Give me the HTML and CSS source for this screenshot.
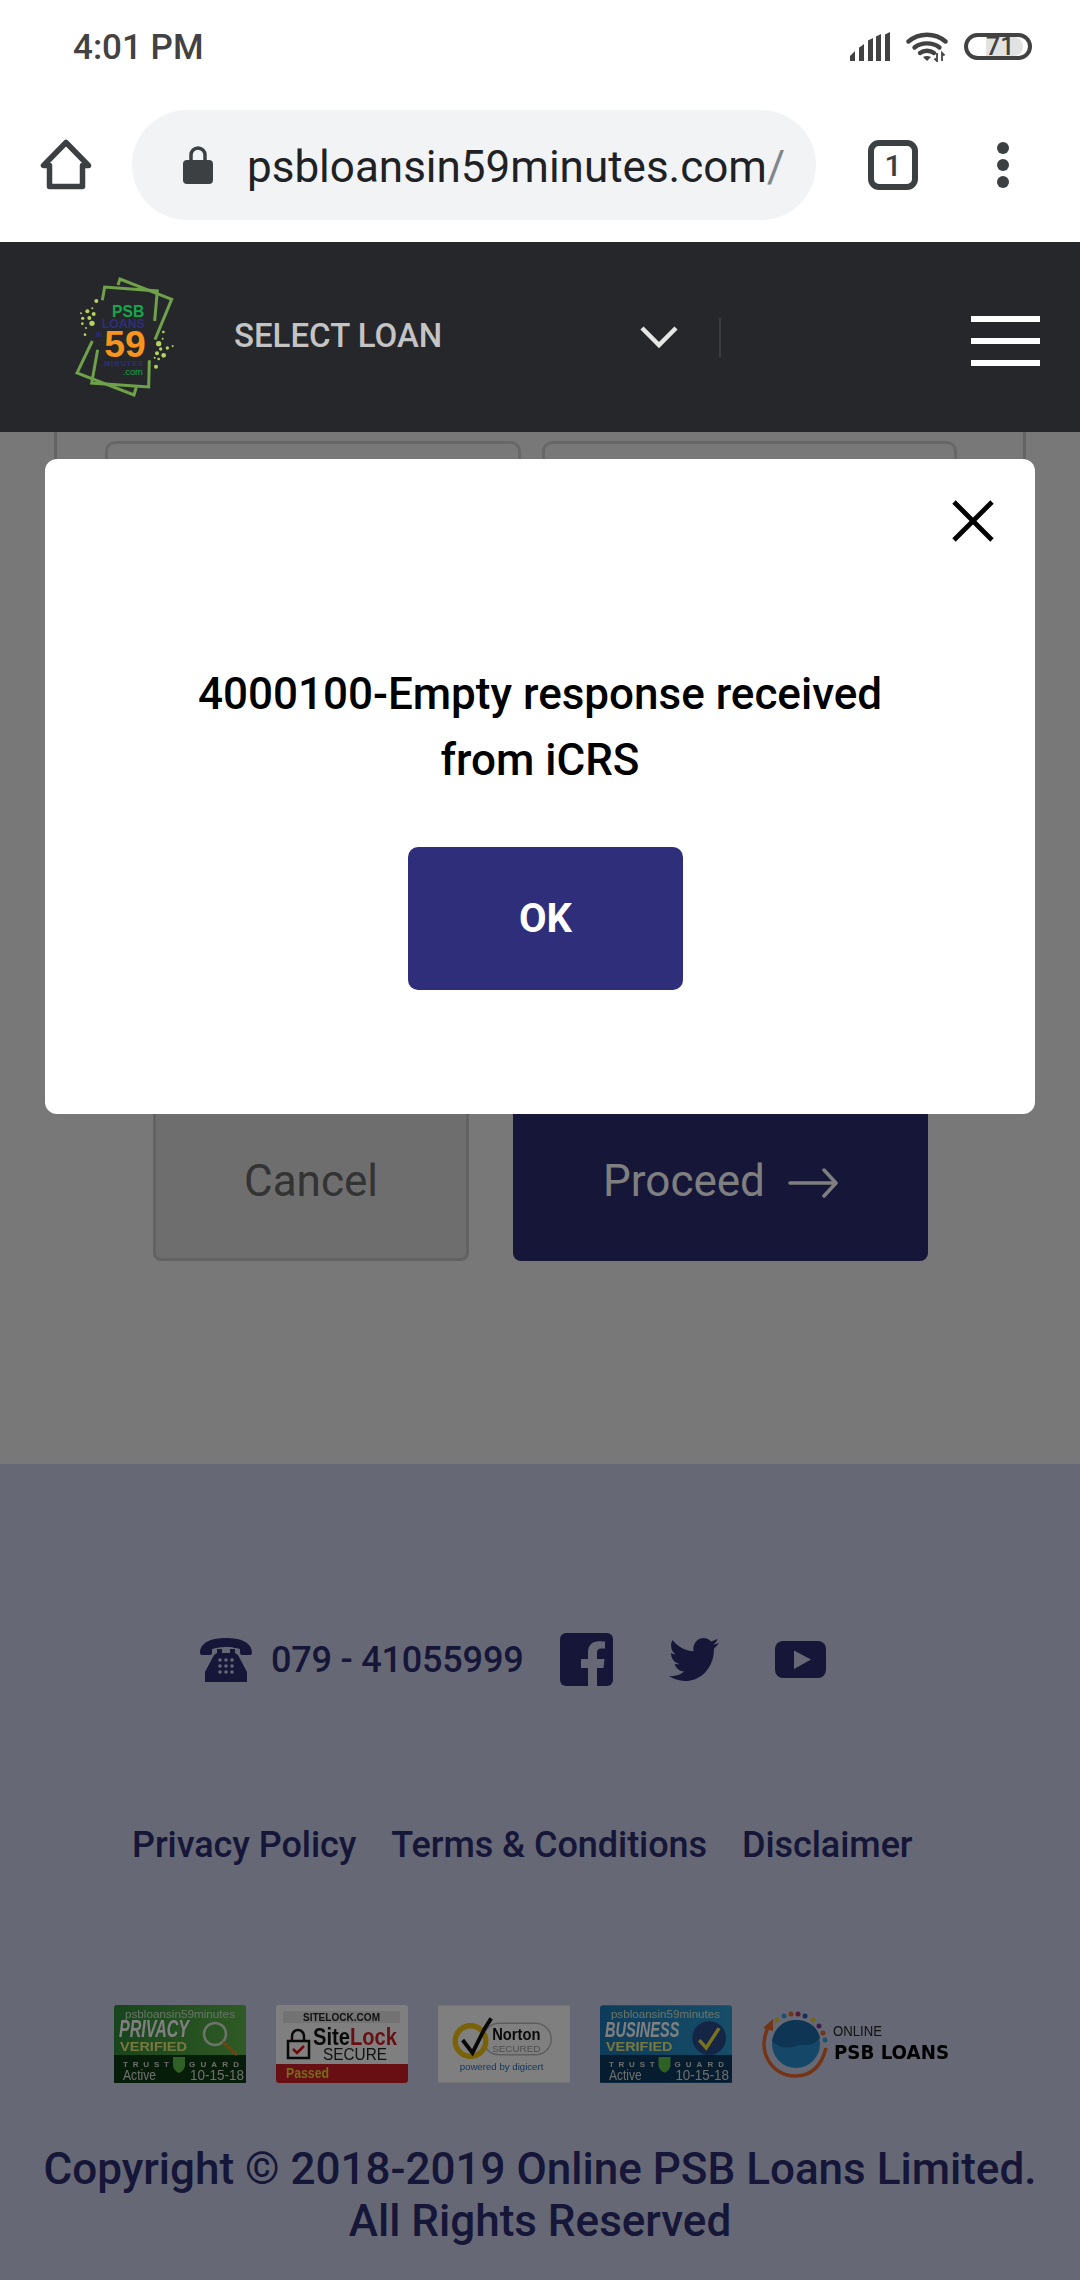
FILE: index.html
```html
<!DOCTYPE html>
<html lang="en">
<head>
<meta charset="utf-8">
<title>PSB Loans in 59 Minutes</title>
<link rel="stylesheet" href="styles.css">
</head>
<body>
<div class="status">
  <span class="time">4:01 PM</span>
  <svg class="signal" viewBox="0 0 40 29"><path d="M0 29v-5l5-5v10zM9 29V16q0-1 1-1l4-3v17zM18 29V9q0-1 1-1l4-2v23zM26 29V5q0-1 1-1l4-2v27zM35 29V3q0-1 1-1l4-2v29z" fill="#424242"/></svg>
  <svg class="wifi" viewBox="0 0 42 30"><g fill="none" stroke="#424242" stroke-width="4.4" stroke-linecap="round"><path d="M2.500 9.500C13 .5 29 .5 39.500 9.500"/><path d="M8.500 15.500C15 10 27 10 33.500 15.500"/><path d="M14 21c4-3 10-3 14 0"/></g><path d="M21 29l-4-4q4-2 8 0z" fill="#424242"/><path d="M31 21v8l-2.500-2.500M36 29v-8l2.500 2.500" fill="none" stroke="#424242" stroke-width="1.800"/></svg>
  <div class="battery"><div class="battery-fill"></div><span class="battery-text">71</span></div>
</div>

<div class="toolbar">
  <svg class="home" viewBox="0 0 52 52"><path d="M26 3.500L3.500 26.500H9.500V47.500H42.500V26.500H48.500Z" fill="none" stroke="#3c4043" stroke-width="5.500" stroke-linejoin="round"/></svg>
  <div class="omnibox">
    <svg class="lock" viewBox="0 0 30 38"><path d="M8 16V9a7 7 0 0 1 14 0v7" fill="none" stroke="#3c4043" stroke-width="3.500"/><rect y="14" width="30" height="24" rx="4" fill="#3c4043"/></svg>
    <span class="url">psbloansin59minutes.com<span class="url-end">/</span></span>
  </div>
  <div class="tabs">1</div>
  <div class="dots"><i></i><i></i><i></i></div>
</div>

<nav class="nav">
  <svg class="logo" viewBox="78 80 306 360">
    <g fill="none" stroke="#6ea14a" stroke-width="9">
      <path d="M207 104L213 86L368 147L318 268"/>
      <path d="M130 272L84 368L255 434L262 410"/>
      <path d="M160 150L167 110L325 122L317 212"/>
      <path d="M146 298L128 398L299 410L301 330"/>
    </g>
    <g fill="#b4d35f">
      <circle cx="142" cy="152" r="6"/><circle cx="115" cy="183" r="6"/><circle cx="134" cy="191" r="6"/><circle cx="101" cy="204" r="5"/><circle cx="121" cy="203" r="6"/><circle cx="129" cy="219" r="8"/><circle cx="100" cy="220" r="4"/><circle cx="108" cy="253" r="4"/><circle cx="111" cy="233" r="3"/><circle cx="130" cy="174" r="3"/><circle cx="96" cy="189" r="3"/>
      <circle cx="329" cy="280" r="8"/><circle cx="355" cy="293" r="5"/><circle cx="335" cy="296" r="5"/><circle cx="324" cy="309" r="6"/><circle cx="344" cy="315" r="7"/><circle cx="321" cy="349" r="6"/><circle cx="329" cy="326" r="4"/><circle cx="343" cy="245" r="4"/><circle cx="341" cy="265" r="3"/><circle cx="371" cy="287" r="3"/><circle cx="317" cy="322" r="3"/>
    </g>
    <text x="189" y="200" class="logo-psb">PSB</text>
    <text x="158" y="234" class="logo-loans">LOANS</text>
    <text x="140" y="260" class="logo-in">IN</text>
    <text x="166" y="320" class="logo-59">59</text>
    <text x="165" y="348" class="logo-minutes">MINUTES</text>
    <text x="221" y="375" class="logo-com">.com</text>
  </svg>
  <span class="select-loan">SELECT LOAN</span>
  <svg class="chevron" viewBox="0 0 38 25"><path d="M2 4L19 21L36 4" fill="none" stroke="#e6e6e6" stroke-width="4.500"/></svg>
  <div class="nav-divider"></div>
  <div class="burger"><i></i><i></i><i></i></div>
</nav>

<div class="content">
  <main class="main">
    <div class="panel">
      <div class="field"></div>
      <div class="field field-two"></div>
    </div>
    <div class="actions">
      <button class="btn btn-cancel">Cancel</button>
      <button class="btn btn-proceed">Proceed
        <svg class="arrow" viewBox="0 0 50 30"><path d="M2 15H47M36 2L48 15L36 28" fill="none" stroke="#fff" stroke-width="3.500" stroke-linecap="round" stroke-linejoin="round"/></svg>
      </button>
    </div>
  </main>

  <footer class="footer">
    <div class="contact">
      <svg class="phone" viewBox="0 0 52 44"><path d="M0 15C0 4 12 0 26 0s26 4 26 15c0 1-1 2-2 2h-8c-1 0-2-1-2-2v-4c-3-1-9-2-14-2s-11 1-14 2v4c0 1-1 2-2 2H2c-1 0-2-1-2-2z" fill="#2a2c70"/><path d="M17 11h5v4h8v-4h5v4l3 2 9 17v10H5V34l9-17 3-2z" fill="#2a2c70"/><g fill="#cdd0ea"><circle cx="20" cy="22" r="1.800"/><circle cx="26" cy="22" r="1.800"/><circle cx="32" cy="22" r="1.800"/><circle cx="20" cy="28" r="1.800"/><circle cx="26" cy="28" r="1.800"/><circle cx="32" cy="28" r="1.800"/><circle cx="20" cy="34" r="1.800"/><circle cx="26" cy="34" r="1.800"/><circle cx="32" cy="34" r="1.800"/></g></svg>
      <span class="phone-number">079 - 41055999</span>
      <svg class="fb" viewBox="0 0 53 53"><rect width="53" height="53" rx="6" fill="#2a2c70"/><path d="M37 53V35h6.500l1-9H37v-6c0-3 1-4.500 4-4.500h4V8.500c-1 0-3.500-.3-6-.3-6.500 0-11 4-11 10.800v7h-7v9h7v18z" fill="#cdd0ea"/></svg>
      <svg class="tw" viewBox="0 48 512 416" preserveAspectRatio="none"><path fill="#2a2c70" d="M459.37 151.716c.325 4.548.325 9.097.325 13.645 0 138.72-105.583 298.558-298.558 298.558-59.452 0-114.68-17.219-161.137-47.106 8.447.974 16.568 1.299 25.34 1.299 49.055 0 94.213-16.568 130.274-44.832-46.132-.975-84.792-31.188-98.112-72.772 6.498.974 12.995 1.624 19.818 1.624 9.421 0 18.843-1.3 27.614-3.573-48.081-9.747-84.143-51.98-84.143-102.985v-1.299c13.969 7.797 30.214 12.67 47.431 13.319-28.264-18.843-46.781-51.005-46.781-87.391 0-19.492 5.197-37.36 14.294-52.954 51.655 63.675 129.3 105.258 216.365 109.807-1.624-7.797-2.599-15.918-2.599-24.04 0-57.828 46.782-104.934 104.934-104.934 30.213 0 57.502 12.67 76.67 33.137 23.715-4.548 46.456-13.32 66.599-25.34-7.798 24.366-24.366 44.833-46.132 57.827 21.117-2.273 41.584-8.122 60.426-16.243-14.292 20.791-32.161 39.308-52.628 54.253z"/></svg>
      <svg class="yt" viewBox="0 0 51 37"><rect width="51" height="37" rx="8" fill="#2a2c70"/><path d="M19 9.500L36 18.500L19 28z" fill="#cdd0ea"/></svg>
    </div>
    <div class="links">
      <a class="link">Privacy Policy</a>
      <a class="link">Terms &amp; Conditions</a>
      <a class="link">Disclaimer</a>
    </div>
    <div class="badges">
      <svg class="badge" viewBox="0 0 132 78">
        <defs><linearGradient id="gp" x1="0" y1="0" x2="1" y2="0"><stop offset="0" stop-color="#2f8a3a"/><stop offset="1" stop-color="#5fb54a"/></linearGradient></defs>
        <rect width="132" height="78" rx="3" fill="url(#gp)"/><rect y="50" width="132" height="28" fill="#0d3d12"/>
        <text x="11" y="13" class="b-top" textLength="110" lengthAdjust="spacingAndGlyphs">psbloansin59minutes</text>
        <text x="5" y="32" class="b-big" textLength="70" lengthAdjust="spacingAndGlyphs">PRIVACY</text>
        <text x="6" y="46" class="b-ver" textLength="67" lengthAdjust="spacingAndGlyphs">VERIFIED</text>
        <circle cx="101" cy="29" r="11" fill="none" stroke="#d8e6d0" stroke-width="2.500"/><path d="M109 37L123 50" stroke="#d98a2b" stroke-width="3"/>
        <text x="9" y="62" class="b-tg" textLength="46">TRUST</text><path d="M59 52h12v9q-1 5-6 7-5-2-6-7z" fill="#5fc34f"/><text x="75" y="62" class="b-tg" textLength="50">GUARD</text>
        <text x="9" y="75" class="b-act" textLength="33" lengthAdjust="spacingAndGlyphs">Active</text><text x="76" y="75" class="b-act" textLength="54" lengthAdjust="spacingAndGlyphs">10-15-18</text>
      </svg>
      <svg class="badge" viewBox="0 0 132 78">
        <rect width="132" height="78" rx="3" fill="#fff"/><rect x="7" y="6" width="117" height="12" fill="#e6e6e6"/>
        <text x="27" y="16" class="s-top" textLength="77" lengthAdjust="spacingAndGlyphs">SITELOCK.COM</text>
        <path d="M16 36v-5a6 6 0 0 1 12 0v5" fill="none" stroke="#111" stroke-width="2.500"/><rect x="12" y="36" width="21" height="17" fill="#fff" stroke="#111" stroke-width="2.500"/><path d="M17 44l4 4 7-7" fill="none" stroke="#d11" stroke-width="2.500"/>
        <text x="37" y="40" class="s-name" textLength="84" lengthAdjust="spacingAndGlyphs">Site<tspan fill="#d01f26">Lock</tspan></text>
        <text x="47" y="55" class="s-sec" textLength="64" lengthAdjust="spacingAndGlyphs">SECURE</text>
        <path d="M0 59H132V75q0 3-3 3H3q-3 0-3-3z" fill="#d01f26"/>
        <text x="10" y="73" class="s-pass" textLength="43" lengthAdjust="spacingAndGlyphs">Passed</text>
      </svg>
      <svg class="badge" viewBox="0 0 134 78">
        <rect width="134" height="78" fill="#fff"/>
        <rect x="46" y="18" width="69" height="32" rx="16" fill="none" stroke="#bbb" stroke-width="1.500"/>
        <circle cx="33" cy="36" r="15.500" fill="#fff" stroke="#f2c40f" stroke-width="5.500"/>
        <path d="M25 35l10 13 12-24 7-11" fill="none" stroke="#111" stroke-width="4"/>
        <text x="55" y="35" class="n-name" textLength="49" lengthAdjust="spacingAndGlyphs">Norton</text><text x="55" y="47" class="n-sec" textLength="49" lengthAdjust="spacingAndGlyphs">SECURED</text>
        <text x="22" y="65" class="n-pow" textLength="85" lengthAdjust="spacingAndGlyphs">powered by digicert</text>
      </svg>
      <svg class="badge" viewBox="0 0 133 78">
        <defs><linearGradient id="gb" x1="0" y1="0" x2="1" y2="0"><stop offset="0" stop-color="#1a78b5"/><stop offset="1" stop-color="#2d9bd2"/></linearGradient></defs>
        <rect width="133" height="78" rx="3" fill="url(#gb)"/><rect y="50" width="133" height="28" fill="#0a3b5f"/>
        <text x="11" y="13" class="b-top" textLength="110" lengthAdjust="spacingAndGlyphs">psbloansin59minutes</text>
        <text x="5" y="32" class="b-big" textLength="75" lengthAdjust="spacingAndGlyphs">BUSINESS</text>
        <text x="6" y="46" class="b-ver" textLength="67" lengthAdjust="spacingAndGlyphs">VERIFIED</text>
        <circle cx="110" cy="33" r="17" fill="#2b4a8a"/><path d="M100 35l7 8 13-20" fill="none" stroke="#f4e23a" stroke-width="3.500"/>
        <text x="9" y="62" class="b-tg" textLength="46">TRUST</text><path d="M59 52h12v9q-1 5-6 7-5-2-6-7z" fill="#5fc34f"/><text x="75" y="62" class="b-tg" textLength="50">GUARD</text>
        <text x="9" y="75" class="b-act" textLength="33" lengthAdjust="spacingAndGlyphs">Active</text><text x="76" y="75" class="b-act" textLength="54" lengthAdjust="spacingAndGlyphs">10-15-18</text>
      </svg>
      <svg class="psb-logo" viewBox="0 0 196 68">
        <path d="M7 16C-6 38 8 66 33 66c18 0 27-12 31-28" fill="none" stroke="#e8692a" stroke-width="3.500"/><path d="M1 18L11 9 11 21z" fill="#e8692a"/>
        <circle cx="34" cy="34" r="24" fill="#2a8fd0"/><path d="M10 31C13 16 23 10 34 10c12 0 22 7 24 18-8 10-16 5-24 8-8 3-18 2-24-5z" fill="#1d6ba8"/>
        <g><circle cx="15" cy="10" r="2.500" fill="#e6c832"/><circle cx="22" cy="6" r="2.500" fill="#37a6d8"/><circle cx="29" cy="4" r="2.500" fill="#e8692a"/><circle cx="36" cy="4" r="2.500" fill="#a8326e"/><circle cx="43" cy="6" r="2.500" fill="#2a5fb0"/><circle cx="51" cy="10" r="2.500" fill="#e6c832"/><circle cx="57" cy="16" r="2.500" fill="#7a3a9a"/><circle cx="61" cy="23" r="2.500" fill="#e8692a"/><circle cx="63" cy="30" r="2.500" fill="#37a6d8"/></g>
        <text x="71" y="26" class="p-on" textLength="49" lengthAdjust="spacingAndGlyphs">ONLINE</text><text x="72" y="49" class="p-psb" textLength="115" lengthAdjust="spacingAndGlyphs">PSB LOANS</text>
      </svg>
    </div>
    <div class="copyright">Copyright © 2018-2019 Online PSB Loans Limited.<br>All Rights Reserved</div>
  </footer>

  <div class="overlay">
    <div class="modal">
      <div class="modal-head">
        <svg class="close" viewBox="0 0 42 42"><path d="M2 2L40 40M40 2L2 40" stroke="#000" stroke-width="4.800" fill="none"/></svg>
      </div>
      <p class="message">4000100-Empty response received<br>from iCRS</p>
      <button class="ok">OK</button>
    </div>
  </div>
</div>
</body>
</html>
```
FILE: styles.css
```css
* { box-sizing: border-box; }
html, body { margin: 0; padding: 0; }
body {
  width: 1080px;
  height: 2280px;
  overflow: hidden;
  font-family: Roboto, "Liberation Sans", sans-serif;
  background: #fff;
}

.status {
  height: 95px;
  display: flex;
  align-items: flex-start;
  padding: 0 48px 0 73px;
  background: #fff;
}
.time { font-size: 35px; font-weight: 500; color: #424242; line-height: 40px; margin-top: 28px; }
.signal { width: 40px; height: 29px; margin: 32px 0 0 auto; }
.wifi { width: 42px; height: 30px; margin: 32px 0 0 16px; }
.battery {
  position: relative;
  width: 68px; height: 27px;
  margin: 33px 0 0 16px;
  border: 4px solid #424242;
  border-radius: 14px;
  display: flex; align-items: center;
}
.battery-fill { width: 37px; height: 19px; margin-left: 18px; background: #e2e2e2; border-radius: 0 9px 9px 0; }
.battery-text { position: absolute; left: 18px; top: -4px; font-size: 25px; font-weight: 500; line-height: 27px; color: #424242; }

.toolbar {
  height: 147px;
  display: flex;
  align-items: flex-start;
  background: #fff;
}
.home { width: 52px; height: 52px; margin: 44px 0 0 40px; }
.omnibox {
  width: 684px; height: 110px;
  margin: 15px 0 0 40px;
  background: #f1f3f4;
  border-radius: 55px;
  display: flex; align-items: center;
  padding-left: 51px;
  overflow: hidden;
}
.lock { width: 30px; height: 38px; flex: none; }
.url { font-size: 44px; color: #202124; margin: 3px 0 0 34px; white-space: nowrap; }
.url-end { color: #80868b; }
.tabs {
  width: 50px; height: 50px;
  margin: 45px 0 0 52px;
  border: 6px solid #3c4043;
  border-radius: 11px;
  font-size: 30px; font-weight: 500; color: #3c4043;
  display: flex; align-items: center; justify-content: center;
}
.dots { display: flex; flex-direction: column; gap: 5px; margin: 47px 0 0 79px; }
.dots i { display: block; width: 12px; height: 12px; border-radius: 50%; background: #3c4043; }

.nav {
  height: 190px;
  background: #25272a;
  display: flex;
  align-items: center;
  position: relative;
  z-index: 2;
}
.logo { width: 102px; height: 120px; margin-left: 75px; flex: none; }
.logo-psb { font: 700 47px "Liberation Sans", sans-serif; fill: #14a84b; }
.logo-loans { font: 700 37px "Liberation Sans", sans-serif; fill: #2e2e7b; }
.logo-in { font: 700 20px "Liberation Sans", sans-serif; fill: #2e2e7b; }
.logo-59 { font: 700 112px "Liberation Sans", sans-serif; fill: #f7941d; }
.logo-minutes { font: 700 22px "Liberation Sans", sans-serif; fill: #2e2e7b; letter-spacing: 3px; }
.logo-com { font: 400 28px "Liberation Sans", sans-serif; fill: #14a84b; }
.select-loan { font-size: 33px; font-weight: 500; color: #c4c4c4; margin: -4px 0 0 57px; white-space: nowrap; width: 406px; }
.chevron { width: 38px; height: 25px; flex: none; margin-top: -2px; }
.nav-divider { width: 2px; height: 39px; background: #3a3c3f; margin-left: 41px; flex: none; }
.burger { display: flex; flex-direction: column; gap: 16px; margin: 8px 0 0 250px; }
.burger i { display: block; width: 69px; height: 6px; background: #fff; }

.content { position: relative; height: 1848px; }
.main { height: 1032px; background: #f0f0f0; }
.panel {
  height: 620px;
  margin: 0 54px;
  border-left: 3px solid #c8c8c8;
  border-right: 3px solid #c8c8c8;
  padding: 9px 0 0 48px;
  display: flex;
  gap: 21px;
  align-items: flex-start;
}
.field { width: 416px; height: 90px; border: 3px solid #cfcfcf; border-radius: 10px; }
.field-two { width: 415px; }
.actions { display: flex; gap: 44px; padding-left: 153px; margin-top: 48px; }
.btn {
  height: 161px;
  font-family: inherit; font-size: 44px;
  border-radius: 8px;
  display: flex; align-items: center; justify-content: center;
  padding: 0;
}
.btn-cancel { width: 316px; background: #dcdcdc; border: 3px solid #c4c4c4; color: #666; }
.btn-proceed { width: 415px; background: #2a2c70; border: 0; color: #fff; gap: 23px; }
.arrow { width: 50px; height: 30px; margin-top: 4px; }

.footer { height: 816px; background: #cdd0ea; color: #2a2c70; padding-top: 169px; }
.contact { display: flex; align-items: center; height: 53px; padding-left: 200px; }
.phone { width: 52px; height: 44px; }
.phone-number { font-size: 36px; font-weight: 500; margin-left: 19px; letter-spacing: -.2px; }
.fb { width: 53px; height: 53px; margin-left: 37px; }
.tw { width: 50px; height: 43px; margin-left: 56px; }
.yt { width: 51px; height: 37px; margin-left: 56px; }
.links { display: flex; gap: 35px; padding-left: 132px; margin-top: 137px; }
.link { font-size: 36px; font-weight: 500; line-height: 44px; letter-spacing: -.06px; }
.badges { display: flex; align-items: center; padding-left: 114px; gap: 30px; margin-top: 138px; height: 78px; }
.badge { width: 132px; height: 78px; flex: none; filter: blur(.6px); }
.psb-logo { width: 196px; height: 68px; flex: none; filter: blur(.4px); }
.b-top { font: 400 11px "Liberation Sans", sans-serif; fill: #cfe6cf; }
.b-big { font: italic 700 23px "Liberation Sans", sans-serif; fill: #fff; }
.b-ver { font: 700 13px "Liberation Sans", sans-serif; fill: #f2ee80; }
.b-tg { font: 700 8px "Liberation Sans", sans-serif; fill: #ddd; }
.b-act { font: 400 14px "Liberation Sans", sans-serif; fill: #ddd; }
.s-top { font: 700 10px "Liberation Sans", sans-serif; fill: #222; }
.s-name { font: 700 24px "Liberation Sans", sans-serif; fill: #111; }
.s-sec { font: 400 17px "Liberation Sans", sans-serif; fill: #222; }
.s-pass { font: 700 14px "Liberation Sans", sans-serif; fill: #ecd438; }
.n-name { font: 700 17px "Liberation Sans", sans-serif; fill: #111; }
.n-sec { font: 400 10px "Liberation Sans", sans-serif; fill: #999; }
.n-pow { font: 400 10px "Liberation Sans", sans-serif; fill: #2a6fb8; }
.p-on { font: 400 14px "Liberation Sans", sans-serif; fill: #222; }
.p-psb { font: 700 19px "DejaVu Sans", sans-serif; fill: #000; }
.copyright { text-align: center; font-size: 44px; font-weight: 500; line-height: 52px; margin-top: 60px; }

.overlay { position: absolute; inset: 0; background: rgba(0,0,0,.5); z-index: 1; }
.modal {
  position: absolute; left: 45px; top: 27px;
  width: 990px; height: 655px;
  background: #fff;
  border-radius: 12px;
  display: flex; flex-direction: column; align-items: center;
}
.modal-head { align-self: stretch; display: flex; justify-content: flex-end; padding: 41px 41px 0 0; }
.close { width: 42px; height: 42px; }
.message { margin: 119px 0 0; font-size: 44px; font-weight: 500; line-height: 66px; text-align: center; color: #000; }
.ok {
  width: 275px; height: 143px;
  margin: 54px 0 0 11px;
  background: #2e2e7b;
  border: 0; border-radius: 10px;
  color: #fff;
  font-family: inherit; font-size: 40px; font-weight: 700;
}
```
